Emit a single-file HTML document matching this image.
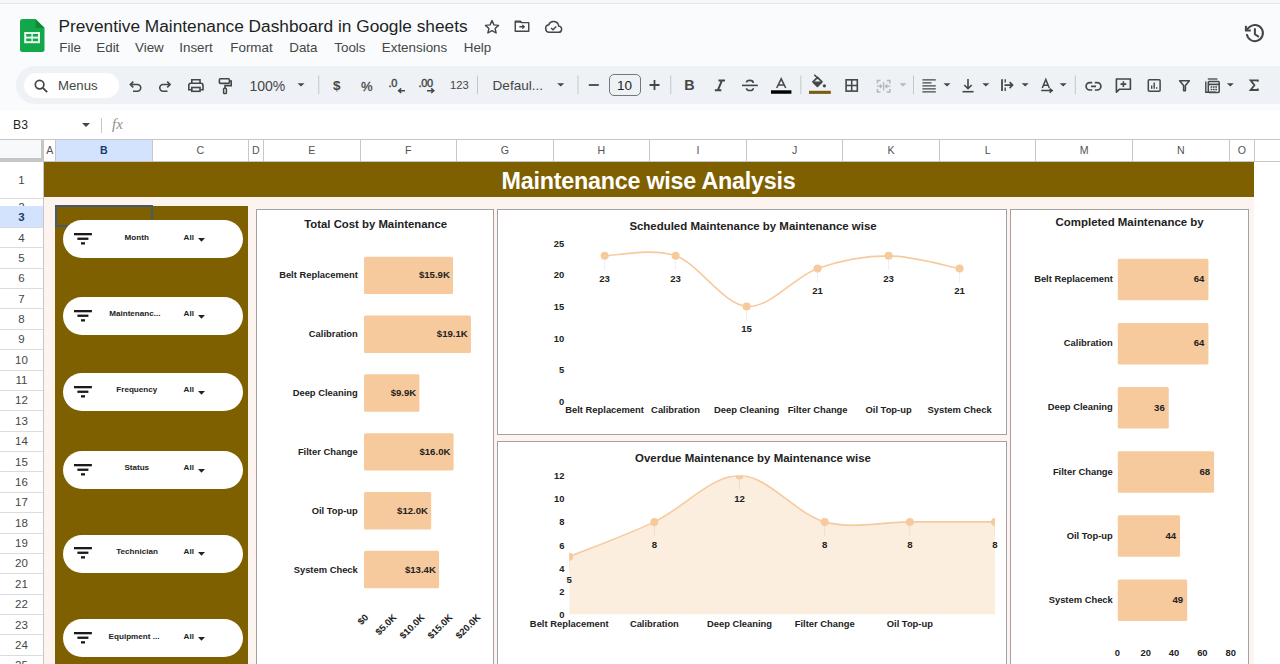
<!DOCTYPE html>
<html><head><meta charset="utf-8"><style>
html,body{margin:0;padding:0;width:1280px;height:664px;overflow:hidden;background:#ffffff;}
body{position:relative;font-family:"Liberation Sans",sans-serif;}
div{box-sizing:content-box}
</style></head><body>
<div style="position:absolute;left:0;top:0;width:1280px;height:3px;background:#f7f7f7"></div>
<div style="position:absolute;left:0;top:3px;width:1280px;height:1px;background:#e6e6e6"></div>
<div style="position:absolute;left:0;top:4px;width:1280px;height:107px;background:#f9fbfd"></div>
<svg style="position:absolute;left:20px;top:19px" width="25" height="33" viewBox="0 0 25 33">
<path d="M2.5 0 H15.5 L24.5 9 V30.5 Q24.5 33 22 33 H2.5 Q0 33 0 30.5 V2.5 Q0 0 2.5 0 Z" fill="#12a84a"/>
<path d="M15.5 0 L24.5 9 H15.5 Z" fill="#0c8a3a"/>
<rect x="4.2" y="13" width="15.8" height="11.2" fill="#e8f7ee"/>
<rect x="6.2" y="15" width="5.2" height="2.6" fill="#12a84a"/>
<rect x="12.8" y="15" width="5.2" height="2.6" fill="#12a84a"/>
<rect x="6.2" y="19.6" width="5.2" height="2.6" fill="#12a84a"/>
<rect x="12.8" y="19.6" width="5.2" height="2.6" fill="#12a84a"/>
</svg>
<div style="position:absolute;left:58.4px;top:16px;font-size:17.3px;color:#1f1f1f;white-space:nowrap;line-height:20px">Preventive Maintenance Dashboard in Google sheets</div>
<div style="position:absolute;left:59.25px;top:39px;font-size:13.4px;color:#444746;white-space:nowrap;line-height:17px">File</div>
<div style="position:absolute;left:96.25px;top:39px;font-size:13.4px;color:#444746;white-space:nowrap;line-height:17px">Edit</div>
<div style="position:absolute;left:135px;top:39px;font-size:13.4px;color:#444746;white-space:nowrap;line-height:17px">View</div>
<div style="position:absolute;left:179.25px;top:39px;font-size:13.4px;color:#444746;white-space:nowrap;line-height:17px">Insert</div>
<div style="position:absolute;left:230.25px;top:39px;font-size:13.4px;color:#444746;white-space:nowrap;line-height:17px">Format</div>
<div style="position:absolute;left:289.25px;top:39px;font-size:13.4px;color:#444746;white-space:nowrap;line-height:17px">Data</div>
<div style="position:absolute;left:334.25px;top:39px;font-size:13.4px;color:#444746;white-space:nowrap;line-height:17px">Tools</div>
<div style="position:absolute;left:381.75px;top:39px;font-size:13.4px;color:#444746;white-space:nowrap;line-height:17px">Extensions</div>
<div style="position:absolute;left:463.75px;top:39px;font-size:13.4px;color:#444746;white-space:nowrap;line-height:17px">Help</div>
<svg style="position:absolute;left:483px;top:18px" width="18" height="18" viewBox="0 0 24 24"><path d="M12 3.5 L14.6 9.2 L20.8 9.8 L16.1 13.9 L17.5 20 L12 16.8 L6.5 20 L7.9 13.9 L3.2 9.8 L9.4 9.2 Z" fill="none" stroke="#444746" stroke-width="1.9" stroke-linejoin="round"/></svg>
<svg style="position:absolute;left:513px;top:17px" width="18" height="18" viewBox="0 0 24 24"><path d="M3 5.5 H9.5 L11.5 7.5 H21 V19 H3 Z" fill="none" stroke="#444746" stroke-width="1.9" stroke-linejoin="round"/><path d="M3 5.5 H9.5 L11.5 7.5 H3 Z" fill="#444746"/><path d="M8.5 13 H15 M12.5 10.5 L15 13 L12.5 15.5" fill="none" stroke="#444746" stroke-width="1.8"/></svg>
<svg style="position:absolute;left:544px;top:18px" width="19" height="16" viewBox="0 0 24 20"><path d="M6.5 18 H18 A4 4 0 0 0 18.5 10 A6.5 6.5 0 0 0 6 8.5 A4.8 4.8 0 0 0 6.5 18 Z" fill="none" stroke="#444746" stroke-width="1.9"/><path d="M9 12.5 L11.3 14.8 L15.5 10.6" fill="none" stroke="#444746" stroke-width="1.8"/></svg>
<svg style="position:absolute;left:1240px;top:20px" width="30" height="26" viewBox="0 0 30 26"><path d="M6.8 14.2 A8.1 8.1 0 1 0 9.2 7.2 L6.4 9.9" fill="none" stroke="#444746" stroke-width="2"/><path d="M5.9 5.8 V10.5 H10.8" fill="none" stroke="#444746" stroke-width="2"/><path d="M14.9 8.2 V14.3 L18.9 16.8" fill="none" stroke="#444746" stroke-width="2"/></svg>
<div style="position:absolute;left:15.5px;top:66.3px;width:1300px;height:37.5px;border-radius:19px;background:#eef1f5"></div>
<div style="position:absolute;left:24px;top:72.5px;width:95px;height:25px;border-radius:13px;background:#ffffff"></div>
<div style="position:absolute;left:58px;top:77px;font-size:13.2px;color:#444746;line-height:17px">Menus</div>
<div style="position:absolute;left:249.5px;top:77.5px;font-size:14px;color:#444746;line-height:17px">100%</div>
<div style="position:absolute;left:492.5px;top:76.5px;font-size:13.6px;color:#444746;line-height:17px">Defaul...</div>
<div style="position:absolute;left:608.75px;top:73.75px;width:29.75px;height:20.5px;border:1px solid #747775;border-radius:5px"></div>
<div style="position:absolute;left:608.75px;top:77px;width:31.75px;text-align:center;font-size:13.5px;color:#1f1f1f;line-height:17px">10</div>
<div style="position:absolute;left:333px;top:77px;font-size:13.5px;font-weight:bold;color:#444746;line-height:17px">$</div>
<div style="position:absolute;left:361px;top:77.5px;font-size:13px;color:#444746;line-height:17px;-webkit-text-stroke:0.3px #444746">%</div>
<div style="position:absolute;left:388.5px;top:77px;font-size:11px;color:#444746;line-height:12px;letter-spacing:-0.3px;-webkit-text-stroke:0.4px #444746">.0</div>
<div style="position:absolute;left:418.5px;top:77px;font-size:11px;color:#444746;line-height:12px;letter-spacing:-0.3px;-webkit-text-stroke:0.4px #444746">.00</div>
<div style="position:absolute;left:450px;top:77.5px;font-size:11.2px;color:#444746;line-height:14px">123</div>
<div style="position:absolute;left:684.3px;top:77.6px;font-size:14.3px;font-weight:bold;color:#444746;line-height:15px">B</div>
<svg style="position:absolute;left:0;top:0" width="1280" height="110" viewBox="0 0 1280 110" fill="none" stroke="#444746">
<circle cx="39.6" cy="84.6" r="4.3" stroke-width="1.7"/><path d="M42.8 87.8 L47.2 92.2" stroke-width="1.9"/>
<path d="M130.5 84.5 H137.4 A3.35 3.35 0 0 1 137.4 91.2 H133" stroke-width="1.6"/><path d="M133.3 81.6 L130.4 84.5 L133.3 87.4" stroke-width="1.6"/>
<path d="M170 84.5 H163.1 A3.35 3.35 0 0 0 163.1 91.2 H167.5" stroke-width="1.6"/><path d="M167.2 81.6 L170.1 84.5 L167.2 87.4" stroke-width="1.6"/>
<path d="M191.8 83 V79.8 H200 V83" stroke-width="1.6"/><path d="M191.5 89.8 H188.8 V85.5 Q188.8 83.3 191 83.3 H200.8 Q203 83.3 203 85.5 V89.8 H200.3" stroke-width="1.6"/><rect x="191.8" y="87.5" width="8.2" height="3.8" stroke-width="1.6"/>
<rect x="219.4" y="78.8" width="10" height="4.6" rx="1" stroke-width="1.6"/><path d="M229.4 81 H231.2 V85.6 H225 V88.3" stroke-width="1.6"/><rect x="223.6" y="88.3" width="2.8" height="5.3" rx="0.8" stroke-width="1.5"/>
<path d="M297.5 83.3 H304.5 L301 86.6 Z" fill="#444746" stroke="none"/>
<path d="M318.75 75.5 V94.2" stroke="#c7c7c7" stroke-width="1"/>
<path d="M477.5 75.5 V94.2" stroke="#c7c7c7" stroke-width="1"/>
<path d="M578 75.5 V94.2" stroke="#c7c7c7" stroke-width="1"/>
<path d="M670.75 75.5 V94.2" stroke="#c7c7c7" stroke-width="1"/>
<path d="M800.8 75.5 V94.2" stroke="#c7c7c7" stroke-width="1"/>
<path d="M913.5 75.5 V94.2" stroke="#c7c7c7" stroke-width="1"/>
<path d="M1075.3 75.5 V94.2" stroke="#c7c7c7" stroke-width="1"/>
<path d="M405 90.7 H398.8 M401.2 88.4 L398.6 90.7 L401.2 93" stroke-width="1.5"/>
<path d="M427 90.7 H433.6 M431.2 88.4 L433.8 90.7 L431.2 93" stroke-width="1.5"/>
<path d="M557.2 83.3 H564.2 L560.7 86.6 Z" fill="#444746" stroke="none"/>
<path d="M588.8 85 H598.8" stroke-width="1.8"/>
<path d="M649.5 85 H659.5 M654.5 80 V90" stroke-width="1.8"/>
<path d="M718.5 80.6 H725 M714.8 90.2 H721.3 M721.9 80.6 L717.9 90.2" stroke-width="2"/>
<path d="M742 85.4 H757.8" stroke-width="1.6"/><path d="M753.3 83 Q753.3 80.4 749.9 80.4 Q746.5 80.4 746.5 82.6 M746.5 88.2 Q746.5 90.5 749.9 90.5 Q753.3 90.5 753.3 88.2" stroke-width="1.6"/>
<path d="M776.7 88 L781.2 78.8 L785.7 88 M778.2 85 H784.2" stroke-width="1.5"/><rect x="771" y="90.3" width="20.4" height="3.45" fill="#000" stroke="none"/>
<path d="M814.3 74.8 L818.6 79" stroke-width="1.6"/><path d="M817.6 77.4 L822 81.9 L817.4 86.4 L812.9 81.9 Z" stroke-width="1.6" stroke-linejoin="round"/><path d="M812.9 81.6 H822 L817.4 86.4 Z" fill="#444746" stroke="none"/><circle cx="824.4" cy="85.8" r="1.6" fill="#444746" stroke="none"/><rect x="809" y="90.8" width="21.8" height="3.1" fill="#7a5e10" stroke="none"/>
<rect x="846.1" y="79.8" width="11.2" height="11.3" stroke-width="1.6"/><path d="M851.7 79.8 V91.1 M846.1 85.45 H857.3" stroke-width="1.5"/>
<path d="M877.4 83.5 V80.5 H880.5 M886.7 80.5 H889.8 V83.5 M877.4 88.9 V91.9 H880.5 M886.7 91.9 H889.8 V88.9" stroke="#b4b7bb" stroke-width="1.5"/><path d="M876.8 86.2 H881.6 M879.9 84.4 L881.8 86.2 L879.9 88 M890.4 86.2 H885.6 M887.3 84.4 L885.4 86.2 L887.3 88 M883.6 82 V90.4" stroke="#b4b7bb" stroke-width="1.3"/>
<path d="M899.5 83.3 H906.5 L903 86.6 Z" fill="#b4b7bb" stroke="none"/>
<path d="M922.4 79.9 H935.8 M922.4 82.9 H931.5 M922.4 85.9 H935.8 M922.4 88.9 H935.8 M922.4 91.9 H935.8" stroke-width="1.3"/>
<path d="M943.5 83.3 H950.5 L947 86.6 Z" fill="#444746" stroke="none"/>
<path d="M968 78.9 V88.5 M964.3 85 L968 88.7 L971.7 85" stroke-width="1.6"/><path d="M962.5 91.7 H973.6" stroke-width="1.6"/>
<path d="M982.3 83.3 H989.3 L985.8 86.6 Z" fill="#444746" stroke="none"/>
<path d="M1002 79.2 V91" stroke-width="1.8"/><path d="M1005.2 79.2 V82.5 M1005.2 87.5 V91" stroke-width="1.4"/><path d="M1004.5 85.1 H1012.5 M1009.6 82.1 L1012.6 85.1 L1009.6 88.1" stroke-width="1.6"/>
<path d="M1021.7 83.3 H1028.7 L1025.2 86.6 Z" fill="#444746" stroke="none"/>
<path d="M1042.3 88 L1045.8 79.4 L1049.3 88 M1043.5 85.2 H1048.1" stroke-width="1.5"/><path d="M1041.2 90.6 H1052 M1049.6 88.6 L1052.2 90.6 L1049.6 92.6" stroke-width="1.5"/>
<path d="M1059.7 83.3 H1066.7 L1063.2 86.6 Z" fill="#444746" stroke="none"/>
<path d="M1092.2 82.6 H1089.8 A3.7 3.7 0 0 0 1089.8 90 H1092.2 M1094.8 82.6 H1097.2 A3.7 3.7 0 0 1 1097.2 90 H1094.8 M1091 86.3 H1096" stroke-width="1.7"/>
<path d="M1116.4 79 H1130.4 V89.2 H1119.6 L1116.4 92.2 Z" stroke-width="1.6" stroke-linejoin="round"/><path d="M1123.4 81.2 V87 M1120.5 84.1 H1126.3" stroke-width="1.6"/>
<rect x="1148.3" y="79.7" width="11.8" height="11.5" rx="1" stroke-width="1.5"/><path d="M1151.7 88.8 V85.4 M1154.2 88.8 V82.6 M1156.7 88.8 V87.2" stroke-width="1.4"/>
<path d="M1179.6 80.8 H1189.4 L1185.4 85.6 V90.8 H1183.6 V85.6 Z" stroke-width="1.5" stroke-linejoin="round"/>
<path d="M1205.8 81.6 V92.2 H1215.8" stroke-width="1.4"/><path d="M1207.8 79 H1217.4" stroke-width="1.3"/><rect x="1208.3" y="81.6" width="10.9" height="10.9" rx="1" stroke-width="1.5"/><path d="M1208.3 84.4 H1219.2" stroke-width="1.6"/><path d="M1210.6 86.9 H1212.3 M1213 86.9 H1214.6 M1215.3 86.9 H1217 M1210.6 89.6 H1212.3 M1213 89.6 H1214.6 M1215.3 89.6 H1217" stroke-width="1.5"/>
<path d="M1226.8 83.3 H1233.8 L1230.3 86.6 Z" fill="#444746" stroke="none"/>
<path d="M1257.8 81.8 V80.4 H1250.6 L1254.4 85.2 L1250.6 90 H1257.8 V88.6" stroke-width="1.8" stroke-linejoin="miter"/>
</svg>
<div style="position:absolute;left:0;top:111px;width:1280px;height:28px;background:#ffffff"></div>
<div style="position:absolute;left:13px;top:117px;font-size:12.2px;color:#1f1f1f;line-height:16px">B3</div>
<svg style="position:absolute;left:82px;top:123px" width="8" height="4" viewBox="0 0 8 4"><path d="M0 0 H8 L4 4 Z" fill="#444746"/></svg>
<div style="position:absolute;left:101px;top:117.5px;width:1px;height:15px;background:#c7c7c7"></div>
<div style="position:absolute;left:112px;top:116px;font-size:15px;font-style:italic;color:#8e8e8e;line-height:17px;font-family:'Liberation Serif',serif">fx</div>
<div style="position:absolute;left:0;top:139px;width:1280px;height:1px;background:#c4c7c5"></div>
<div style="position:absolute;left:0;top:140px;width:1280px;height:22px;background:#ffffff"></div>
<div style="position:absolute;left:0;top:161px;width:1280px;height:1px;background:#c4c7c5"></div>
<div style="position:absolute;left:0;top:140px;width:41px;height:18px;background:#f8f9fa"></div>
<div style="position:absolute;left:0;top:158px;width:44px;height:4px;background:#c4c7c5"></div>
<div style="position:absolute;left:41px;top:140px;width:3px;height:22px;background:#c4c7c5"></div>
<div style="position:absolute;left:44px;top:140px;width:11.399999999999999px;height:21px;background:#ffffff;color:#505356;font-weight:normal;font-size:10.6px;line-height:20.5px;text-align:center">A</div>
<div style="position:absolute;left:55.4px;top:140px;width:97.1px;height:21px;background:#d3e3fd;color:#1b3d6e;font-weight:bold;font-size:10.6px;line-height:20.5px;text-align:center">B</div>
<div style="position:absolute;left:152.5px;top:140px;width:95.9px;height:21px;background:#ffffff;color:#505356;font-weight:normal;font-size:10.6px;line-height:20.5px;text-align:center">C</div>
<div style="position:absolute;left:248.4px;top:140px;width:15.099999999999994px;height:21px;background:#ffffff;color:#505356;font-weight:normal;font-size:10.6px;line-height:20.5px;text-align:center">D</div>
<div style="position:absolute;left:263.5px;top:140px;width:96.55000000000001px;height:21px;background:#ffffff;color:#505356;font-weight:normal;font-size:10.6px;line-height:20.5px;text-align:center">E</div>
<div style="position:absolute;left:360.05px;top:140px;width:96.55000000000001px;height:21px;background:#ffffff;color:#505356;font-weight:normal;font-size:10.6px;line-height:20.5px;text-align:center">F</div>
<div style="position:absolute;left:456.6px;top:140px;width:96.54999999999995px;height:21px;background:#ffffff;color:#505356;font-weight:normal;font-size:10.6px;line-height:20.5px;text-align:center">G</div>
<div style="position:absolute;left:553.15px;top:140px;width:96.54999999999995px;height:21px;background:#ffffff;color:#505356;font-weight:normal;font-size:10.6px;line-height:20.5px;text-align:center">H</div>
<div style="position:absolute;left:649.6999999999999px;top:140px;width:96.54999999999995px;height:21px;background:#ffffff;color:#505356;font-weight:normal;font-size:10.6px;line-height:20.5px;text-align:center">I</div>
<div style="position:absolute;left:746.2499999999999px;top:140px;width:96.54999999999995px;height:21px;background:#ffffff;color:#505356;font-weight:normal;font-size:10.6px;line-height:20.5px;text-align:center">J</div>
<div style="position:absolute;left:842.7999999999998px;top:140px;width:96.54999999999995px;height:21px;background:#ffffff;color:#505356;font-weight:normal;font-size:10.6px;line-height:20.5px;text-align:center">K</div>
<div style="position:absolute;left:939.3499999999998px;top:140px;width:96.55000000000007px;height:21px;background:#ffffff;color:#505356;font-weight:normal;font-size:10.6px;line-height:20.5px;text-align:center">L</div>
<div style="position:absolute;left:1035.8999999999999px;top:140px;width:96.54999999999995px;height:21px;background:#ffffff;color:#505356;font-weight:normal;font-size:10.6px;line-height:20.5px;text-align:center">M</div>
<div style="position:absolute;left:1132.4499999999998px;top:140px;width:96.54999999999995px;height:21px;background:#ffffff;color:#505356;font-weight:normal;font-size:10.6px;line-height:20.5px;text-align:center">N</div>
<div style="position:absolute;left:1229.5px;top:140px;width:24.799999999999955px;height:21px;background:#ffffff;color:#505356;font-weight:normal;font-size:10.6px;line-height:20.5px;text-align:center">O</div>
<div style="position:absolute;left:54.9px;top:140px;width:1px;height:21px;background:#c7c7c7"></div>
<div style="position:absolute;left:152.0px;top:140px;width:1px;height:21px;background:#c7c7c7"></div>
<div style="position:absolute;left:247.9px;top:140px;width:1px;height:21px;background:#c7c7c7"></div>
<div style="position:absolute;left:263.0px;top:140px;width:1px;height:21px;background:#c7c7c7"></div>
<div style="position:absolute;left:359.55px;top:140px;width:1px;height:21px;background:#c7c7c7"></div>
<div style="position:absolute;left:456.1px;top:140px;width:1px;height:21px;background:#c7c7c7"></div>
<div style="position:absolute;left:552.65px;top:140px;width:1px;height:21px;background:#c7c7c7"></div>
<div style="position:absolute;left:649.1999999999999px;top:140px;width:1px;height:21px;background:#c7c7c7"></div>
<div style="position:absolute;left:745.7499999999999px;top:140px;width:1px;height:21px;background:#c7c7c7"></div>
<div style="position:absolute;left:842.2999999999998px;top:140px;width:1px;height:21px;background:#c7c7c7"></div>
<div style="position:absolute;left:938.8499999999998px;top:140px;width:1px;height:21px;background:#c7c7c7"></div>
<div style="position:absolute;left:1035.3999999999999px;top:140px;width:1px;height:21px;background:#c7c7c7"></div>
<div style="position:absolute;left:1131.9499999999998px;top:140px;width:1px;height:21px;background:#c7c7c7"></div>
<div style="position:absolute;left:1228.4999999999998px;top:140px;width:1px;height:21px;background:#c7c7c7"></div>
<div style="position:absolute;left:1253.8px;top:140px;width:1px;height:21px;background:#c7c7c7"></div>
<div style="position:absolute;left:0;top:162px;width:44px;height:510px;background:#ffffff"></div>
<div style="position:absolute;left:43px;top:162px;width:1px;height:510px;background:#c4c7c5"></div>
<div style="position:absolute;left:0;top:162px;width:43px;height:36px;text-align:center;font-size:11.5px;line-height:37.6px;color:#444746;font-weight:normal">1</div>
<div style="position:absolute;left:0;top:197.5px;width:43px;height:1px;background:#dadce0"></div>
<div style="position:absolute;left:0;top:198px;width:43px;height:8px;overflow:hidden"><div style="position:absolute;left:0;top:-1px;width:43px;text-align:center;font-size:11px;line-height:20px;color:#444746;top:-1px">2</div></div>
<div style="position:absolute;left:0;top:205.5px;width:43px;height:1px;background:#dadce0"></div>
<div style="position:absolute;left:0;top:206px;width:43px;height:21.5px;background:#d3e3fd"></div>
<div style="position:absolute;left:0;top:206px;width:43px;height:21.5px;text-align:center;font-size:11.5px;line-height:23.1px;color:#1b3d6e;font-weight:bold">3</div>
<div style="position:absolute;left:0;top:227.0px;width:43px;height:1px;background:#dadce0"></div>
<div style="position:absolute;left:0;top:227.5px;width:43px;height:20.370000000000005px;text-align:center;font-size:11.5px;line-height:21.970000000000006px;color:#444746;font-weight:normal">4</div>
<div style="position:absolute;left:0;top:247.37px;width:43px;height:1px;background:#dadce0"></div>
<div style="position:absolute;left:0;top:247.87px;width:43px;height:20.370000000000005px;text-align:center;font-size:11.5px;line-height:21.970000000000006px;color:#444746;font-weight:normal">5</div>
<div style="position:absolute;left:0;top:267.74px;width:43px;height:1px;background:#dadce0"></div>
<div style="position:absolute;left:0;top:268.24px;width:43px;height:20.370000000000005px;text-align:center;font-size:11.5px;line-height:21.970000000000006px;color:#444746;font-weight:normal">6</div>
<div style="position:absolute;left:0;top:288.11px;width:43px;height:1px;background:#dadce0"></div>
<div style="position:absolute;left:0;top:288.61px;width:43px;height:20.370000000000005px;text-align:center;font-size:11.5px;line-height:21.970000000000006px;color:#444746;font-weight:normal">7</div>
<div style="position:absolute;left:0;top:308.48px;width:43px;height:1px;background:#dadce0"></div>
<div style="position:absolute;left:0;top:308.98px;width:43px;height:20.370000000000005px;text-align:center;font-size:11.5px;line-height:21.970000000000006px;color:#444746;font-weight:normal">8</div>
<div style="position:absolute;left:0;top:328.85px;width:43px;height:1px;background:#dadce0"></div>
<div style="position:absolute;left:0;top:329.35px;width:43px;height:20.370000000000005px;text-align:center;font-size:11.5px;line-height:21.970000000000006px;color:#444746;font-weight:normal">9</div>
<div style="position:absolute;left:0;top:349.22px;width:43px;height:1px;background:#dadce0"></div>
<div style="position:absolute;left:0;top:349.72px;width:43px;height:20.370000000000005px;text-align:center;font-size:11.5px;line-height:21.970000000000006px;color:#444746;font-weight:normal">10</div>
<div style="position:absolute;left:0;top:369.59000000000003px;width:43px;height:1px;background:#dadce0"></div>
<div style="position:absolute;left:0;top:370.09000000000003px;width:43px;height:20.370000000000005px;text-align:center;font-size:11.5px;line-height:21.970000000000006px;color:#444746;font-weight:normal">11</div>
<div style="position:absolute;left:0;top:389.96000000000004px;width:43px;height:1px;background:#dadce0"></div>
<div style="position:absolute;left:0;top:390.46000000000004px;width:43px;height:20.370000000000005px;text-align:center;font-size:11.5px;line-height:21.970000000000006px;color:#444746;font-weight:normal">12</div>
<div style="position:absolute;left:0;top:410.33000000000004px;width:43px;height:1px;background:#dadce0"></div>
<div style="position:absolute;left:0;top:410.83000000000004px;width:43px;height:20.370000000000005px;text-align:center;font-size:11.5px;line-height:21.970000000000006px;color:#444746;font-weight:normal">13</div>
<div style="position:absolute;left:0;top:430.70000000000005px;width:43px;height:1px;background:#dadce0"></div>
<div style="position:absolute;left:0;top:431.20000000000005px;width:43px;height:20.370000000000005px;text-align:center;font-size:11.5px;line-height:21.970000000000006px;color:#444746;font-weight:normal">14</div>
<div style="position:absolute;left:0;top:451.07000000000005px;width:43px;height:1px;background:#dadce0"></div>
<div style="position:absolute;left:0;top:451.57000000000005px;width:43px;height:20.369999999999948px;text-align:center;font-size:11.5px;line-height:21.96999999999995px;color:#444746;font-weight:normal">15</div>
<div style="position:absolute;left:0;top:471.44px;width:43px;height:1px;background:#dadce0"></div>
<div style="position:absolute;left:0;top:471.94px;width:43px;height:20.370000000000005px;text-align:center;font-size:11.5px;line-height:21.970000000000006px;color:#444746;font-weight:normal">16</div>
<div style="position:absolute;left:0;top:491.81px;width:43px;height:1px;background:#dadce0"></div>
<div style="position:absolute;left:0;top:492.31px;width:43px;height:20.37000000000006px;text-align:center;font-size:11.5px;line-height:21.970000000000063px;color:#444746;font-weight:normal">17</div>
<div style="position:absolute;left:0;top:512.1800000000001px;width:43px;height:1px;background:#dadce0"></div>
<div style="position:absolute;left:0;top:512.6800000000001px;width:43px;height:20.36999999999989px;text-align:center;font-size:11.5px;line-height:21.969999999999892px;color:#444746;font-weight:normal">18</div>
<div style="position:absolute;left:0;top:532.55px;width:43px;height:1px;background:#dadce0"></div>
<div style="position:absolute;left:0;top:533.05px;width:43px;height:20.37000000000012px;text-align:center;font-size:11.5px;line-height:21.97000000000012px;color:#444746;font-weight:normal">19</div>
<div style="position:absolute;left:0;top:552.9200000000001px;width:43px;height:1px;background:#dadce0"></div>
<div style="position:absolute;left:0;top:553.4200000000001px;width:43px;height:20.36999999999989px;text-align:center;font-size:11.5px;line-height:21.969999999999892px;color:#444746;font-weight:normal">20</div>
<div style="position:absolute;left:0;top:573.29px;width:43px;height:1px;background:#dadce0"></div>
<div style="position:absolute;left:0;top:573.79px;width:43px;height:20.37000000000012px;text-align:center;font-size:11.5px;line-height:21.97000000000012px;color:#444746;font-weight:normal">21</div>
<div style="position:absolute;left:0;top:593.6600000000001px;width:43px;height:1px;background:#dadce0"></div>
<div style="position:absolute;left:0;top:594.1600000000001px;width:43px;height:20.36999999999989px;text-align:center;font-size:11.5px;line-height:21.969999999999892px;color:#444746;font-weight:normal">22</div>
<div style="position:absolute;left:0;top:614.03px;width:43px;height:1px;background:#dadce0"></div>
<div style="position:absolute;left:0;top:614.53px;width:43px;height:20.37000000000012px;text-align:center;font-size:11.5px;line-height:21.97000000000012px;color:#444746;font-weight:normal">23</div>
<div style="position:absolute;left:0;top:634.4000000000001px;width:43px;height:1px;background:#dadce0"></div>
<div style="position:absolute;left:0;top:634.9000000000001px;width:43px;height:20.36999999999989px;text-align:center;font-size:11.5px;line-height:21.969999999999892px;color:#444746;font-weight:normal">24</div>
<div style="position:absolute;left:0;top:654.77px;width:43px;height:1px;background:#dadce0"></div>
<div style="position:absolute;left:0;top:655.27px;width:43px;height:20.37000000000012px;text-align:center;font-size:11.5px;line-height:21.97000000000012px;color:#444746;font-weight:normal">25</div>
<div style="position:absolute;left:0;top:675.1400000000001px;width:43px;height:1px;background:#dadce0"></div>
<div style="position:absolute;left:44px;top:162px;width:1210.3px;height:510px;background:#fdf4ef"></div>
<div style="position:absolute;left:44px;top:161.8px;width:1210.3px;height:35.7px;background:#7f6000"></div>
<div style="position:absolute;left:501.5px;top:162.5px;color:#ffffff;font-weight:bold;font-size:23.3px;letter-spacing:-0.22px;line-height:37px;white-space:nowrap">Maintenance wise Analysis</div>
<div style="position:absolute;left:55.3px;top:206px;width:192.5px;height:470px;background:#7f6000"></div>
<div style="position:absolute;left:55px;top:204.8px;width:97.5px;height:22.5px;border:2.3px solid #45596c;box-sizing:border-box"></div>
<div style="position:absolute;left:62.6px;top:220.2px;width:180px;height:38px;border-radius:19px;background:#ffffff"></div>
<svg style="position:absolute;left:74.4px;top:233.0px" width="19" height="12" viewBox="0 0 19 12"><rect x="0" y="0" width="17.9" height="2.3" fill="#1a1a1a"/><rect x="3.4" y="4.6" width="11" height="2.3" fill="#1a1a1a"/><rect x="7" y="9.2" width="4" height="2.3" fill="#1a1a1a"/></svg>
<div style="position:absolute;left:96.75px;top:232.5px;width:80px;text-align:center;font-size:8.1px;font-weight:bold;color:#222;line-height:10px;white-space:nowrap">Month</div>
<div style="position:absolute;left:183.6px;top:232.5px;font-size:8.1px;font-weight:bold;color:#222;line-height:10px">All</div>
<svg style="position:absolute;left:198.3px;top:237.89999999999998px" width="7" height="4" viewBox="0 0 7 4"><path d="M0 0 H7 L3.5 3.8 Z" fill="#222"/></svg>
<div style="position:absolute;left:62.6px;top:296.9px;width:180px;height:38px;border-radius:19px;background:#ffffff"></div>
<svg style="position:absolute;left:74.4px;top:309.7px" width="19" height="12" viewBox="0 0 19 12"><rect x="0" y="0" width="17.9" height="2.3" fill="#1a1a1a"/><rect x="3.4" y="4.6" width="11" height="2.3" fill="#1a1a1a"/><rect x="7" y="9.2" width="4" height="2.3" fill="#1a1a1a"/></svg>
<div style="position:absolute;left:94.85px;top:309.2px;width:80px;text-align:center;font-size:8.1px;font-weight:bold;color:#222;line-height:10px;white-space:nowrap">Maintenanc...</div>
<div style="position:absolute;left:183.6px;top:309.2px;font-size:8.1px;font-weight:bold;color:#222;line-height:10px">All</div>
<svg style="position:absolute;left:198.3px;top:314.59999999999997px" width="7" height="4" viewBox="0 0 7 4"><path d="M0 0 H7 L3.5 3.8 Z" fill="#222"/></svg>
<div style="position:absolute;left:62.6px;top:372.9px;width:180px;height:38px;border-radius:19px;background:#ffffff"></div>
<svg style="position:absolute;left:74.4px;top:385.7px" width="19" height="12" viewBox="0 0 19 12"><rect x="0" y="0" width="17.9" height="2.3" fill="#1a1a1a"/><rect x="3.4" y="4.6" width="11" height="2.3" fill="#1a1a1a"/><rect x="7" y="9.2" width="4" height="2.3" fill="#1a1a1a"/></svg>
<div style="position:absolute;left:96.80000000000001px;top:385.2px;width:80px;text-align:center;font-size:8.1px;font-weight:bold;color:#222;line-height:10px;white-space:nowrap">Frequency</div>
<div style="position:absolute;left:183.6px;top:385.2px;font-size:8.1px;font-weight:bold;color:#222;line-height:10px">All</div>
<svg style="position:absolute;left:198.3px;top:390.59999999999997px" width="7" height="4" viewBox="0 0 7 4"><path d="M0 0 H7 L3.5 3.8 Z" fill="#222"/></svg>
<div style="position:absolute;left:62.6px;top:450.8px;width:180px;height:38px;border-radius:19px;background:#ffffff"></div>
<svg style="position:absolute;left:74.4px;top:463.6px" width="19" height="12" viewBox="0 0 19 12"><rect x="0" y="0" width="17.9" height="2.3" fill="#1a1a1a"/><rect x="3.4" y="4.6" width="11" height="2.3" fill="#1a1a1a"/><rect x="7" y="9.2" width="4" height="2.3" fill="#1a1a1a"/></svg>
<div style="position:absolute;left:96.75px;top:463.1px;width:80px;text-align:center;font-size:8.1px;font-weight:bold;color:#222;line-height:10px;white-space:nowrap">Status</div>
<div style="position:absolute;left:183.6px;top:463.1px;font-size:8.1px;font-weight:bold;color:#222;line-height:10px">All</div>
<svg style="position:absolute;left:198.3px;top:468.5px" width="7" height="4" viewBox="0 0 7 4"><path d="M0 0 H7 L3.5 3.8 Z" fill="#222"/></svg>
<div style="position:absolute;left:62.6px;top:534.6px;width:180px;height:38px;border-radius:19px;background:#ffffff"></div>
<svg style="position:absolute;left:74.4px;top:547.4px" width="19" height="12" viewBox="0 0 19 12"><rect x="0" y="0" width="17.9" height="2.3" fill="#1a1a1a"/><rect x="3.4" y="4.6" width="11" height="2.3" fill="#1a1a1a"/><rect x="7" y="9.2" width="4" height="2.3" fill="#1a1a1a"/></svg>
<div style="position:absolute;left:97px;top:546.9px;width:80px;text-align:center;font-size:8.1px;font-weight:bold;color:#222;line-height:10px;white-space:nowrap">Technician</div>
<div style="position:absolute;left:183.6px;top:546.9px;font-size:8.1px;font-weight:bold;color:#222;line-height:10px">All</div>
<svg style="position:absolute;left:198.3px;top:552.3000000000001px" width="7" height="4" viewBox="0 0 7 4"><path d="M0 0 H7 L3.5 3.8 Z" fill="#222"/></svg>
<div style="position:absolute;left:62.6px;top:619.4px;width:180px;height:38px;border-radius:19px;background:#ffffff"></div>
<svg style="position:absolute;left:74.4px;top:632.1999999999999px" width="19" height="12" viewBox="0 0 19 12"><rect x="0" y="0" width="17.9" height="2.3" fill="#1a1a1a"/><rect x="3.4" y="4.6" width="11" height="2.3" fill="#1a1a1a"/><rect x="7" y="9.2" width="4" height="2.3" fill="#1a1a1a"/></svg>
<div style="position:absolute;left:94px;top:631.6999999999999px;width:80px;text-align:center;font-size:8.1px;font-weight:bold;color:#222;line-height:10px;white-space:nowrap">Equipment ...</div>
<div style="position:absolute;left:183.6px;top:631.6999999999999px;font-size:8.1px;font-weight:bold;color:#222;line-height:10px">All</div>
<svg style="position:absolute;left:198.3px;top:637.1px" width="7" height="4" viewBox="0 0 7 4"><path d="M0 0 H7 L3.5 3.8 Z" fill="#222"/></svg>
<svg style="position:absolute;left:0;top:0" width="1280" height="664" viewBox="0 0 1280 664" font-family="Liberation Sans, sans-serif">
<rect x="256.5" y="209.5" width="237" height="500" fill="#fff" stroke="#a2a2a2" stroke-width="1"/>
<rect x="497.5" y="209.5" width="509" height="225" fill="#fff" stroke="#a2a2a2" stroke-width="1"/>
<rect x="497.5" y="441.5" width="509" height="300" fill="#fff" stroke="#a2a2a2" stroke-width="1"/>
<rect x="1010.5" y="209.5" width="238" height="500" fill="#fff" stroke="#a2a2a2" stroke-width="1"/>
<text x="375.7" y="224.1" text-anchor="middle" dominant-baseline="central" font-weight="bold" font-size="11.35" fill="#222222">Total Cost by Maintenance</text>
<rect x="364" y="256.70" width="89.04" height="37.4" rx="1.5" fill="#f7ca9d"/>
<text x="357.8" y="274.90" text-anchor="end" dominant-baseline="central" font-weight="bold" font-size="9.4" fill="#222222">Belt Replacement</text>
<text x="449.84" y="274.90" text-anchor="end" dominant-baseline="central" font-weight="bold" font-size="9.6" fill="#222222">$15.9K</text>
<rect x="364" y="315.52" width="106.96" height="37.4" rx="1.5" fill="#f7ca9d"/>
<text x="357.8" y="333.72" text-anchor="end" dominant-baseline="central" font-weight="bold" font-size="9.4" fill="#222222">Calibration</text>
<text x="467.76" y="333.72" text-anchor="end" dominant-baseline="central" font-weight="bold" font-size="9.6" fill="#222222">$19.1K</text>
<rect x="364" y="374.34" width="55.44" height="37.4" rx="1.5" fill="#f7ca9d"/>
<text x="357.8" y="392.54" text-anchor="end" dominant-baseline="central" font-weight="bold" font-size="9.4" fill="#222222">Deep Cleaning</text>
<text x="416.24" y="392.54" text-anchor="end" dominant-baseline="central" font-weight="bold" font-size="9.6" fill="#222222">$9.9K</text>
<rect x="364" y="433.16" width="89.60" height="37.4" rx="1.5" fill="#f7ca9d"/>
<text x="357.8" y="451.36" text-anchor="end" dominant-baseline="central" font-weight="bold" font-size="9.4" fill="#222222">Filter Change</text>
<text x="450.40" y="451.36" text-anchor="end" dominant-baseline="central" font-weight="bold" font-size="9.6" fill="#222222">$16.0K</text>
<rect x="364" y="491.98" width="67.20" height="37.4" rx="1.5" fill="#f7ca9d"/>
<text x="357.8" y="510.18" text-anchor="end" dominant-baseline="central" font-weight="bold" font-size="9.4" fill="#222222">Oil Top-up</text>
<text x="428.00" y="510.18" text-anchor="end" dominant-baseline="central" font-weight="bold" font-size="9.6" fill="#222222">$12.0K</text>
<rect x="364" y="550.80" width="75.04" height="37.4" rx="1.5" fill="#f7ca9d"/>
<text x="357.8" y="569.00" text-anchor="end" dominant-baseline="central" font-weight="bold" font-size="9.4" fill="#222222">System Check</text>
<text x="435.84" y="569.00" text-anchor="end" dominant-baseline="central" font-weight="bold" font-size="9.6" fill="#222222">$13.4K</text>
<text x="369" y="618" text-anchor="end" font-weight="bold" font-size="9.4" fill="#222222" transform="rotate(-45 369 618)">$0</text>
<text x="397" y="618" text-anchor="end" font-weight="bold" font-size="9.4" fill="#222222" transform="rotate(-45 397 618)">$5.0K</text>
<text x="425" y="618" text-anchor="end" font-weight="bold" font-size="9.4" fill="#222222" transform="rotate(-45 425 618)">$10.0K</text>
<text x="453" y="618" text-anchor="end" font-weight="bold" font-size="9.4" fill="#222222" transform="rotate(-45 453 618)">$15.0K</text>
<text x="481" y="618" text-anchor="end" font-weight="bold" font-size="9.4" fill="#222222" transform="rotate(-45 481 618)">$20.0K</text>
<text x="753" y="226.4" text-anchor="middle" dominant-baseline="central" font-weight="bold" font-size="11.45" fill="#222222">Scheduled Maintenance by Maintenance wise</text>
<text x="564.2" y="401.20" text-anchor="end" dominant-baseline="central" font-weight="bold" font-size="9.4" fill="#222222">0</text>
<text x="564.2" y="369.60" text-anchor="end" dominant-baseline="central" font-weight="bold" font-size="9.4" fill="#222222">5</text>
<text x="564.2" y="338.00" text-anchor="end" dominant-baseline="central" font-weight="bold" font-size="9.4" fill="#222222">10</text>
<text x="564.2" y="306.40" text-anchor="end" dominant-baseline="central" font-weight="bold" font-size="9.4" fill="#222222">15</text>
<text x="564.2" y="274.80" text-anchor="end" dominant-baseline="central" font-weight="bold" font-size="9.4" fill="#222222">20</text>
<text x="564.2" y="243.20" text-anchor="end" dominant-baseline="central" font-weight="bold" font-size="9.4" fill="#222222">25</text>
<path d="M604.60,255.84 C616.43,255.84 651.93,247.41 675.60,255.84 C699.27,264.27 722.93,304.29 746.60,306.40 C770.27,308.51 793.93,276.91 817.60,268.48 C841.27,260.05 864.93,255.84 888.60,255.84 C912.27,255.84 947.77,266.37 959.60,268.48" fill="none" stroke="#f7ca9d" stroke-width="1.6"/>
<line x1="604.6" y1="255.83999999999997" x2="604.6" y2="269.84" stroke="#efefef" stroke-width="1"/>
<circle cx="604.60" cy="255.84" r="4" fill="#f7ca9d"/>
<text x="604.60" y="278.34" text-anchor="middle" dominant-baseline="central" font-weight="bold" font-size="9.6" fill="#222222">23</text>
<text x="604.60" y="409.3" text-anchor="middle" dominant-baseline="central" font-weight="bold" font-size="9.4" fill="#222222">Belt Replacement</text>
<line x1="675.6" y1="255.83999999999997" x2="675.6" y2="269.84" stroke="#efefef" stroke-width="1"/>
<circle cx="675.60" cy="255.84" r="4" fill="#f7ca9d"/>
<text x="675.60" y="278.34" text-anchor="middle" dominant-baseline="central" font-weight="bold" font-size="9.6" fill="#222222">23</text>
<text x="675.60" y="409.3" text-anchor="middle" dominant-baseline="central" font-weight="bold" font-size="9.4" fill="#222222">Calibration</text>
<line x1="746.6" y1="306.4" x2="746.6" y2="320.4" stroke="#efefef" stroke-width="1"/>
<circle cx="746.60" cy="306.40" r="4" fill="#f7ca9d"/>
<text x="746.60" y="328.90" text-anchor="middle" dominant-baseline="central" font-weight="bold" font-size="9.6" fill="#222222">15</text>
<text x="746.60" y="409.3" text-anchor="middle" dominant-baseline="central" font-weight="bold" font-size="9.4" fill="#222222">Deep Cleaning</text>
<line x1="817.6" y1="268.48" x2="817.6" y2="282.48" stroke="#efefef" stroke-width="1"/>
<circle cx="817.60" cy="268.48" r="4" fill="#f7ca9d"/>
<text x="817.60" y="290.98" text-anchor="middle" dominant-baseline="central" font-weight="bold" font-size="9.6" fill="#222222">21</text>
<text x="817.60" y="409.3" text-anchor="middle" dominant-baseline="central" font-weight="bold" font-size="9.4" fill="#222222">Filter Change</text>
<line x1="888.6" y1="255.83999999999997" x2="888.6" y2="269.84" stroke="#efefef" stroke-width="1"/>
<circle cx="888.60" cy="255.84" r="4" fill="#f7ca9d"/>
<text x="888.60" y="278.34" text-anchor="middle" dominant-baseline="central" font-weight="bold" font-size="9.6" fill="#222222">23</text>
<text x="888.60" y="409.3" text-anchor="middle" dominant-baseline="central" font-weight="bold" font-size="9.4" fill="#222222">Oil Top-up</text>
<line x1="959.6" y1="268.48" x2="959.6" y2="282.48" stroke="#efefef" stroke-width="1"/>
<circle cx="959.60" cy="268.48" r="4" fill="#f7ca9d"/>
<text x="959.60" y="290.98" text-anchor="middle" dominant-baseline="central" font-weight="bold" font-size="9.6" fill="#222222">21</text>
<text x="959.60" y="409.3" text-anchor="middle" dominant-baseline="central" font-weight="bold" font-size="9.4" fill="#222222">System Check</text>
<text x="753" y="458.4" text-anchor="middle" dominant-baseline="central" font-weight="bold" font-size="11.45" fill="#222222">Overdue Maintenance by Maintenance wise</text>
<text x="564.4" y="614.60" text-anchor="end" dominant-baseline="central" font-weight="bold" font-size="9.4" fill="#222222">0</text>
<text x="564.4" y="591.42" text-anchor="end" dominant-baseline="central" font-weight="bold" font-size="9.4" fill="#222222">2</text>
<text x="564.4" y="568.24" text-anchor="end" dominant-baseline="central" font-weight="bold" font-size="9.4" fill="#222222">4</text>
<text x="564.4" y="545.06" text-anchor="end" dominant-baseline="central" font-weight="bold" font-size="9.4" fill="#222222">6</text>
<text x="564.4" y="521.88" text-anchor="end" dominant-baseline="central" font-weight="bold" font-size="9.4" fill="#222222">8</text>
<text x="564.4" y="498.70" text-anchor="end" dominant-baseline="central" font-weight="bold" font-size="9.4" fill="#222222">10</text>
<text x="564.4" y="475.52" text-anchor="end" dominant-baseline="central" font-weight="bold" font-size="9.4" fill="#222222">12</text>
<clipPath id="c3"><rect x="569.2" y="475.5" width="425.8" height="139.1"/></clipPath>
<g clip-path="url(#c3)">
<path d="M569.20,556.65 C583.39,550.86 625.97,535.40 654.36,521.88 C682.75,508.36 711.13,475.52 739.52,475.52 C767.91,475.52 796.29,514.15 824.68,521.88 C853.07,529.61 881.45,521.88 909.84,521.88 C938.23,521.88 980.81,521.88 995.00,521.88 L995.00,614.6 L569.20,614.6 Z" fill="#f7ca9d" fill-opacity="0.33"/>
<path d="M569.20,556.65 C583.39,550.86 625.97,535.40 654.36,521.88 C682.75,508.36 711.13,475.52 739.52,475.52 C767.91,475.52 796.29,514.15 824.68,521.88 C853.07,529.61 881.45,521.88 909.84,521.88 C938.23,521.88 980.81,521.88 995.00,521.88" fill="none" stroke="#f7ca9d" stroke-width="1.6"/>
<line x1="569.2" y1="556.65" x2="569.2" y2="570.65" stroke="#f3dcc6" stroke-width="1"/>
<circle cx="569.20" cy="556.65" r="4" fill="#f7ca9d"/>
<line x1="654.36" y1="521.88" x2="654.36" y2="535.88" stroke="#f3dcc6" stroke-width="1"/>
<circle cx="654.36" cy="521.88" r="4" fill="#f7ca9d"/>
<line x1="739.52" y1="475.52000000000004" x2="739.52" y2="489.52000000000004" stroke="#f3dcc6" stroke-width="1"/>
<circle cx="739.52" cy="475.52" r="4" fill="#f7ca9d"/>
<line x1="824.6800000000001" y1="521.88" x2="824.6800000000001" y2="535.88" stroke="#f3dcc6" stroke-width="1"/>
<circle cx="824.68" cy="521.88" r="4" fill="#f7ca9d"/>
<line x1="909.84" y1="521.88" x2="909.84" y2="535.88" stroke="#f3dcc6" stroke-width="1"/>
<circle cx="909.84" cy="521.88" r="4" fill="#f7ca9d"/>
<line x1="995.0" y1="521.88" x2="995.0" y2="535.88" stroke="#f3dcc6" stroke-width="1"/>
<circle cx="995.00" cy="521.88" r="4" fill="#f7ca9d"/>
</g>
<text x="569.20" y="579.15" text-anchor="middle" dominant-baseline="central" font-weight="bold" font-size="9.6" fill="#222222">5</text>
<text x="569.20" y="623.8" text-anchor="middle" dominant-baseline="central" font-weight="bold" font-size="9.4" fill="#222222">Belt Replacement</text>
<text x="654.36" y="544.38" text-anchor="middle" dominant-baseline="central" font-weight="bold" font-size="9.6" fill="#222222">8</text>
<text x="654.36" y="623.8" text-anchor="middle" dominant-baseline="central" font-weight="bold" font-size="9.4" fill="#222222">Calibration</text>
<text x="739.52" y="498.02" text-anchor="middle" dominant-baseline="central" font-weight="bold" font-size="9.6" fill="#222222">12</text>
<text x="739.52" y="623.8" text-anchor="middle" dominant-baseline="central" font-weight="bold" font-size="9.4" fill="#222222">Deep Cleaning</text>
<text x="824.68" y="544.38" text-anchor="middle" dominant-baseline="central" font-weight="bold" font-size="9.6" fill="#222222">8</text>
<text x="824.68" y="623.8" text-anchor="middle" dominant-baseline="central" font-weight="bold" font-size="9.4" fill="#222222">Filter Change</text>
<text x="909.84" y="544.38" text-anchor="middle" dominant-baseline="central" font-weight="bold" font-size="9.6" fill="#222222">8</text>
<text x="909.84" y="623.8" text-anchor="middle" dominant-baseline="central" font-weight="bold" font-size="9.4" fill="#222222">Oil Top-up</text>
<text x="995.00" y="544.38" text-anchor="middle" dominant-baseline="central" font-weight="bold" font-size="9.6" fill="#222222">8</text>
<text x="1129.6" y="221.9" text-anchor="middle" dominant-baseline="central" font-weight="bold" font-size="11.45" fill="#222222">Completed Maintenance by</text>
<rect x="1117.8" y="258.75" width="90.62" height="41.5" rx="1.5" fill="#f7ca9d"/>
<text x="1112.8" y="278.60" text-anchor="end" dominant-baseline="central" font-weight="bold" font-size="9.4" fill="#222222">Belt Replacement</text>
<text x="1204.42" y="278.80" text-anchor="end" dominant-baseline="central" font-weight="bold" font-size="9.6" fill="#222222">64</text>
<rect x="1117.8" y="322.90" width="90.62" height="41.5" rx="1.5" fill="#f7ca9d"/>
<text x="1112.8" y="342.75" text-anchor="end" dominant-baseline="central" font-weight="bold" font-size="9.4" fill="#222222">Calibration</text>
<text x="1204.42" y="342.95" text-anchor="end" dominant-baseline="central" font-weight="bold" font-size="9.6" fill="#222222">64</text>
<rect x="1117.8" y="387.05" width="50.98" height="41.5" rx="1.5" fill="#f7ca9d"/>
<text x="1112.8" y="406.90" text-anchor="end" dominant-baseline="central" font-weight="bold" font-size="9.4" fill="#222222">Deep Cleaning</text>
<text x="1164.78" y="407.10" text-anchor="end" dominant-baseline="central" font-weight="bold" font-size="9.6" fill="#222222">36</text>
<rect x="1117.8" y="451.20" width="96.29" height="41.5" rx="1.5" fill="#f7ca9d"/>
<text x="1112.8" y="471.05" text-anchor="end" dominant-baseline="central" font-weight="bold" font-size="9.4" fill="#222222">Filter Change</text>
<text x="1210.09" y="471.25" text-anchor="end" dominant-baseline="central" font-weight="bold" font-size="9.6" fill="#222222">68</text>
<rect x="1117.8" y="515.35" width="62.30" height="41.5" rx="1.5" fill="#f7ca9d"/>
<text x="1112.8" y="535.20" text-anchor="end" dominant-baseline="central" font-weight="bold" font-size="9.4" fill="#222222">Oil Top-up</text>
<text x="1176.10" y="535.40" text-anchor="end" dominant-baseline="central" font-weight="bold" font-size="9.6" fill="#222222">44</text>
<rect x="1117.8" y="579.50" width="69.38" height="41.5" rx="1.5" fill="#f7ca9d"/>
<text x="1112.8" y="599.35" text-anchor="end" dominant-baseline="central" font-weight="bold" font-size="9.4" fill="#222222">System Check</text>
<text x="1183.18" y="599.55" text-anchor="end" dominant-baseline="central" font-weight="bold" font-size="9.6" fill="#222222">49</text>
<text x="1117.40" y="652.2" text-anchor="middle" dominant-baseline="central" font-weight="bold" font-size="9.4" fill="#222222">0</text>
<text x="1145.73" y="652.2" text-anchor="middle" dominant-baseline="central" font-weight="bold" font-size="9.4" fill="#222222">20</text>
<text x="1174.06" y="652.2" text-anchor="middle" dominant-baseline="central" font-weight="bold" font-size="9.4" fill="#222222">40</text>
<text x="1202.39" y="652.2" text-anchor="middle" dominant-baseline="central" font-weight="bold" font-size="9.4" fill="#222222">60</text>
<text x="1230.72" y="652.2" text-anchor="middle" dominant-baseline="central" font-weight="bold" font-size="9.4" fill="#222222">80</text>
</svg>
</body></html>
